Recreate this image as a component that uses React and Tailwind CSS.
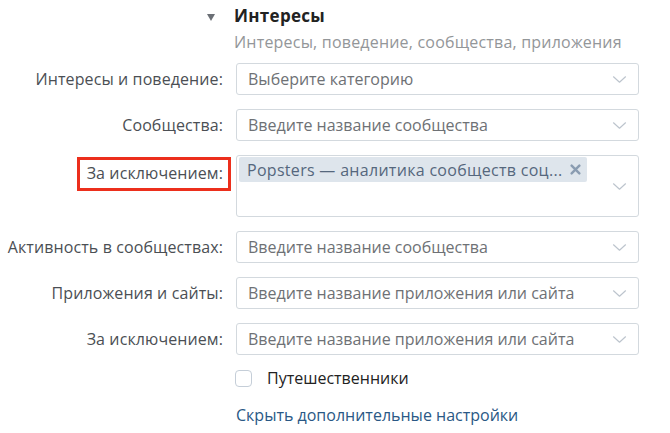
import React from 'react';

const Chevron = () => (
  <svg className="w-[15px] h-[9px] shrink-0" viewBox="0 0 15 9" fill="none" stroke="#bcc4cd" strokeWidth="1.2" strokeLinecap="round" strokeLinejoin="round">
    <path d="M1.5 1.8 7.5 7.2 13.5 1.8" />
  </svg>
);

const rows = [
  { label: 'Интересы и поведение:', placeholder: 'Выберите категорию' },
  { label: 'Сообщества:', placeholder: 'Введите название сообщества' },
  { label: 'За исключением:', chip: 'Popsters — аналитика сообществ соц...', marked: true },
  { label: 'Активность в сообществах:', placeholder: 'Введите название сообщества' },
  { label: 'Приложения и сайты:', placeholder: 'Введите название приложения или сайта' },
  { label: 'За исключением:', placeholder: 'Введите название приложения или сайта' },
];

export default function App() {
  return (
    <div className="w-[670px] h-[433px] bg-white overflow-hidden text-[16px]" style={{ fontFamily: '"Open Sans", Arial, sans-serif' }}>
      {/* Header */}
      <div className="flex pt-[5px]">
        <div className="w-[236px] flex justify-end pr-[21px] pt-[9px]">
          <svg className="w-[8px] h-[7px]" viewBox="0 0 8 7" fill="#6b6f75">
            <path d="M0 0h8L4 7z" />
          </svg>
        </div>
        <div className="flex flex-col -ml-[2px]">
          <h2 className="text-[17px] font-bold leading-[22px] tracking-[0.3px] text-[#222]">Интересы</h2>
          <p className="mt-[5px] leading-[20px] tracking-[0.2px] text-[#939699]">Интересы, поведение, сообщества, приложения</p>
        </div>
      </div>

      {/* Fields */}
      <div className="flex flex-col gap-[14px] mt-[11px]">
        {rows.map((row, i) => (
          <div key={i} className="flex">
            <div className="w-[236px] shrink-0 flex justify-end items-start pr-[13px]">
              <span className={`relative leading-[32px] tracking-[0.1px] text-[#4b4f54] ${row.chip ? 'mt-[2px]' : ''}`}>
                {row.label}
                {row.marked && (
                  <span className="absolute -left-[10px] -right-[8px] top-[0px] bottom-[-2px] border-[3.5px] border-[#ec2f1c]" />
                )}
              </span>
            </div>
            {row.chip ? (
              <div className="w-[403px] h-[62px] border border-[#d3d9de] rounded-[3px] flex items-center pr-[11px]">
                <div className="flex-1 self-start pt-[1px] pl-[2px]">
                  <div className="inline-flex items-center h-[25px] bg-[#dee5ec] rounded-[2px] pl-[8px] pr-[6px] text-[#55677d]">
                    <span className="leading-[20px] tracking-[0.3px]">{row.chip}</span>
                    <svg className="w-[11px] h-[11px] ml-[8px]" viewBox="0 0 10 10" stroke="#8a9cb1" strokeWidth="2.2" strokeLinecap="round">
                      <path d="M1.5 1.5 8.5 8.5M8.5 1.5 1.5 8.5" />
                    </svg>
                  </div>
                </div>
                <Chevron />
              </div>
            ) : (
              <div className="w-[403px] h-[32px] border border-[#d3d9de] rounded-[3px] flex items-center pl-[11px] pr-[11px]">
                <span className="flex-1 text-[#6e7175] leading-[18px]">{row.placeholder}</span>
                <Chevron />
              </div>
            )}
          </div>
        ))}
      </div>

      {/* Checkbox */}
      <div className="flex items-center mt-[13px] pl-[235px]">
        <span className="w-[17px] h-[17px] border border-[#c5ced8] rounded-[4px] bg-white" />
        <span className="ml-[15px] text-[#222] leading-[20px]">Путешественники</span>
      </div>

      {/* Link */}
      <div className="pl-[236px] mt-[15px]">
        <a className="text-[#2a5885] leading-[20px] cursor-pointer">Скрыть дополнительные настройки</a>
      </div>
    </div>
  );
}
